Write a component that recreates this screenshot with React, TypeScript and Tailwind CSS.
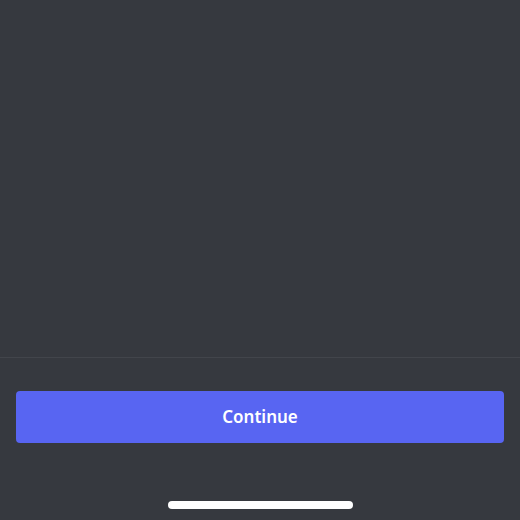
export default function App() {
  return (
    <div className="w-[520px] h-[520px] bg-[#36393f] flex flex-col" style={{ fontFamily: '"Noto Sans", "Open Sans", sans-serif' }}>
      <div className="h-[357px] shrink-0" />
      <div className="h-px bg-[#42454b] shrink-0" />
      <div className="px-4 pt-[33px]">
        <button className="w-full h-[52px] rounded-[4px] bg-[#5865f2] text-white text-[17px] font-semibold flex items-center justify-center">
          Continue
        </button>
      </div>
      <div className="flex justify-center pt-[58px]">
        <div className="w-[185px] h-[8px] rounded-full bg-white" />
      </div>
    </div>
  );
}
